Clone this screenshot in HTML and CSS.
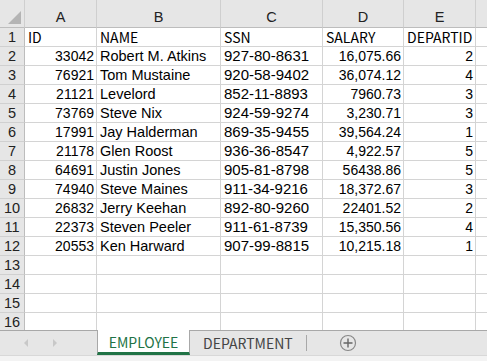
FILE: index.html
```html
<!DOCTYPE html>
<html>
<head>
<meta charset="utf-8">
<link rel="stylesheet" href="styles.css">
</head>
<body>
<div class="app">
  <div class="sheet">
    <div class="row head">
      <div class="c rh corner"><span class="tri"></span></div>
      <div class="c a">A</div><div class="c b">B</div><div class="c cc">C</div><div class="c d">D</div><div class="c e">E</div><div class="c f"></div>
    </div>
    <div class="row labels"><div class="c rh">1</div><div class="c a">ID</div><div class="c b">NAME</div><div class="c cc">SSN</div><div class="c d">SALARY</div><div class="c e">DEPARTID</div><div class="c f"></div></div>
    <div class="row"><div class="c rh">2</div><div class="c a n">33042</div><div class="c b">Robert M. Atkins</div><div class="c cc">927-80-8631</div><div class="c d n">16,075.66</div><div class="c e n">2</div><div class="c f"></div></div>
    <div class="row"><div class="c rh">3</div><div class="c a n">76921</div><div class="c b">Tom Mustaine</div><div class="c cc">920-58-9402</div><div class="c d n">36,074.12</div><div class="c e n">4</div><div class="c f"></div></div>
    <div class="row"><div class="c rh">4</div><div class="c a n">21121</div><div class="c b">Levelord</div><div class="c cc">852-11-8893</div><div class="c d n">7960.73</div><div class="c e n">3</div><div class="c f"></div></div>
    <div class="row"><div class="c rh">5</div><div class="c a n">73769</div><div class="c b">Steve Nix</div><div class="c cc">924-59-9274</div><div class="c d n">3,230.71</div><div class="c e n">3</div><div class="c f"></div></div>
    <div class="row"><div class="c rh">6</div><div class="c a n">17991</div><div class="c b">Jay Halderman</div><div class="c cc">869-35-9455</div><div class="c d n">39,564.24</div><div class="c e n">1</div><div class="c f"></div></div>
    <div class="row"><div class="c rh">7</div><div class="c a n">21178</div><div class="c b">Glen Roost</div><div class="c cc">936-36-8547</div><div class="c d n">4,922.57</div><div class="c e n">5</div><div class="c f"></div></div>
    <div class="row"><div class="c rh">8</div><div class="c a n">64691</div><div class="c b">Justin Jones</div><div class="c cc">905-81-8798</div><div class="c d n">56438.86</div><div class="c e n">5</div><div class="c f"></div></div>
    <div class="row"><div class="c rh">9</div><div class="c a n">74940</div><div class="c b">Steve Maines</div><div class="c cc">911-34-9216</div><div class="c d n">18,372.67</div><div class="c e n">3</div><div class="c f"></div></div>
    <div class="row"><div class="c rh">10</div><div class="c a n">26832</div><div class="c b">Jerry Keehan</div><div class="c cc">892-80-9260</div><div class="c d n">22401.52</div><div class="c e n">2</div><div class="c f"></div></div>
    <div class="row"><div class="c rh">11</div><div class="c a n">22373</div><div class="c b">Steven Peeler</div><div class="c cc">911-61-8739</div><div class="c d n">15,350.56</div><div class="c e n">4</div><div class="c f"></div></div>
    <div class="row"><div class="c rh">12</div><div class="c a n">20553</div><div class="c b">Ken Harward</div><div class="c cc">907-99-8815</div><div class="c d n">10,215.18</div><div class="c e n">1</div><div class="c f"></div></div>
    <div class="row"><div class="c rh">13</div><div class="c a"></div><div class="c b"></div><div class="c cc"></div><div class="c d"></div><div class="c e"></div><div class="c f"></div></div>
    <div class="row"><div class="c rh">14</div><div class="c a"></div><div class="c b"></div><div class="c cc"></div><div class="c d"></div><div class="c e"></div><div class="c f"></div></div>
    <div class="row"><div class="c rh">15</div><div class="c a"></div><div class="c b"></div><div class="c cc"></div><div class="c d"></div><div class="c e"></div><div class="c f"></div></div>
    <div class="row"><div class="c rh">16</div><div class="c a"></div><div class="c b"></div><div class="c cc"></div><div class="c d"></div><div class="c e"></div><div class="c f"></div></div>
  </div>
  <div class="tabbar">
    <div class="nav">
      <svg width="8" height="10" viewBox="0 0 8 10"><path d="M6 1 L2 5 L6 9 Z" fill="#c8c8c8"/></svg>
      <svg width="8" height="10" viewBox="0 0 8 10"><path d="M2 1 L6 5 L2 9 Z" fill="#c8c8c8"/></svg>
    </div>
    <div class="tab active">EMPLOYEE</div>
    <div class="tab">DEPARTMENT</div>
    <div class="sep"></div>
    <div class="add">
      <svg width="18" height="18" viewBox="0 0 18 18"><circle cx="9" cy="9" r="7.5" fill="none" stroke="#888" stroke-width="1.2"/><path d="M9 4.5 V13.5 M4.5 9 H13.5" stroke="#666" stroke-width="1.4"/></svg>
    </div>
  </div>
  <div class="status"></div>
</div>
</body>
</html>
```

FILE: styles.css
```css
html, body {
  margin: 0;
  padding: 0;
  background: #fff;
}
.app {
  width: 487px;
  height: 361px;
  overflow: hidden;
  display: flex;
  flex-direction: column;
  font-family: "Noto Sans CJK SC", "Noto Sans", sans-serif;
  font-size: 14px;
  color: #000;
}
.sheet {
  height: 330px;
  overflow: hidden;
  flex: none;
  font-family: "Liberation Sans", Arial, sans-serif;
  font-size: 14.5px;
}
.row {
  display: flex;
  height: 19px;
}
.row.head {
  height: 28px;
}
.c {
  box-sizing: border-box;
  border-right: 1px solid #d4d4d4;
  border-bottom: 1px solid #d4d4d4;
  padding: 0 3px;
  display: flex;
  align-items: center;
  white-space: nowrap;
  overflow: hidden;
  line-height: 18px;
}
.labels .c {
  font-family: "Noto Sans CJK SC", "Noto Sans", sans-serif;
  font-size: 14px;
}
.labels .rh {
  font-family: "Liberation Sans", Arial, sans-serif;
  font-size: 14.5px;
}
.cc {
  font-size: 15px;
}
.n {
  justify-content: flex-end;
  padding-right: 2px;
  font-size: 14px;
}
.rh {
  width: 25px;
  justify-content: center;
  padding: 0;
  background: #e6e6e6;
  border-right: 1px solid #bdbdbd;
  border-bottom-color: #d0d0d0;
  color: #222;
  font-size: 14.5px;
}
.head .c {
  background: #e6e6e6;
  justify-content: center;
  align-items: flex-end;
  padding-bottom: 1px;
  border-right-color: #cfcfcf;
  border-bottom-color: #bdbdbd;
  color: #222;
  font-size: 14.5px;
}
.head .f { border-right: none; }
.corner {
  position: relative;
}
.tri {
  position: absolute;
  right: 3px;
  bottom: 3px;
  width: 0;
  height: 0;
  border-left: 13px solid transparent;
  border-bottom: 13px solid #b4b4b4;
}
.a { width: 72px; }
.b { width: 124px; }
.cc { width: 102px; }
.d { width: 81px; }
.e { width: 72px; }
.f { flex: 1; border-right: none; }
.tabbar {
  height: 25px;
  flex: none;
  box-sizing: border-box;
  background: #e6e6e6;
  border-top: 1px solid #a8a8a8;
  display: flex;
  align-items: stretch;
}
.nav {
  width: 97px;
  box-sizing: border-box;
  display: flex;
  align-items: center;
  gap: 21px;
  padding-left: 22px;
}
.tab {
  display: flex;
  align-items: center;
  padding: 0 13px;
  color: #444;
  font-size: 14px;
}
.tab.active {
  background: #fff;
  color: #217346;
  margin-top: -1px;
  border-bottom: 3px solid #217346;
  border-left: 1px solid #a8a8a8;
  border-right: 1px solid #a8a8a8;
  padding-top: 2px;
  width: 93px;
  box-sizing: border-box;
  justify-content: center;
}
.sep {
  width: 1px;
  background: #a8a8a8;
  margin: 4px 0 4px 0;
}
.add {
  display: flex;
  align-items: center;
  padding-left: 32px;
}
.status {
  flex: 1;
  background: #f3f3f3;
  border-top: 1px solid #d8d8d8;
}
```
